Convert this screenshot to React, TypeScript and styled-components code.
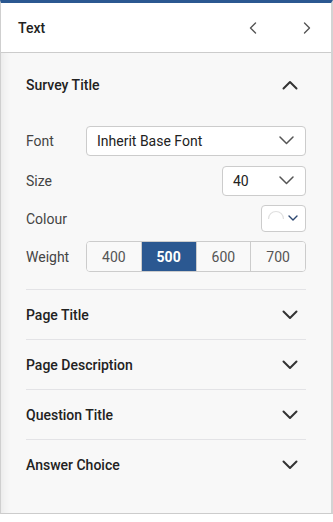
import React from "react";
import styled, { createGlobalStyle } from "styled-components";

const GlobalStyle = createGlobalStyle`
  html, body { margin: 0; padding: 0; background: #ffffff; }
  body { font-family: Roboto, "Liberation Sans", Arial, sans-serif; -webkit-font-smoothing: antialiased; }
  * { box-sizing: border-box; }
`;

const Panel = styled.div`
  width: 333px;
  border-top: 3px solid #2b5891;
  border-left: 1px solid #cfcfcf;
  border-right: 2px solid #d3d3d3;
  border-bottom: 1px solid #cccccc;
  background: #f8f8f8;
`;

const Header = styled.div`
  height: 50px;
  display: flex;
  align-items: center;
  padding: 0 14px 0 17px;
  background: #ffffff;
  border-bottom: 1px solid #cccccc;
`;

const HeaderTitle = styled.div`
  flex: 1;
  font-size: 14px;
  font-weight: 500;
  color: #222222;
`;

const NavButton = styled.button<{ $gap: number }>`
  width: 20px;
  height: 20px;
  padding: 0;
  border: none;
  background: transparent;
  display: flex;
  align-items: center;
  justify-content: center;
  margin-left: ${(p) => p.$gap}px;
`;

const Body = styled.div`
  padding: 7px 25px 24px 25px;
  box-shadow: inset 10px 0 10px -8px rgba(0, 0, 0, 0.07);
  display: flex;
  flex-direction: column;
`;

const Section = styled.div<{ $first?: boolean }>`
  border-top: ${(p) => (p.$first ? "none" : "1px solid #e3e3e6")};
`;

const SectionHeader = styled.div`
  height: 49px;
  display: flex;
  align-items: center;
  justify-content: space-between;
  padding-right: 8px;
`;

const SectionTitle = styled.div`
  font-size: 14px;
  font-weight: 500;
  color: #222222;
`;

const Content = styled.div`
  padding: 17px 0 17px 0;
  display: flex;
  flex-direction: column;
  gap: 9px;
`;

const Row = styled.div<{ $h: number; $mt?: number }>`
  height: ${(p) => p.$h}px;
  margin-top: ${(p) => p.$mt ?? 0}px;
  display: flex;
  align-items: center;
`;

const Label = styled.div`
  width: 60px;
  font-size: 14px;
  color: #444444;
`;

const Spacer = styled.div`
  flex: 1;
`;

const Select = styled.div<{ $w?: number }>`
  ${(p) => (p.$w ? `width: ${p.$w}px;` : "flex: 1;")}
  height: 100%;
  background: #ffffff;
  border: 1px solid #cccccc;
  border-radius: 4px;
  display: flex;
  align-items: center;
  padding: 0 11px 0 10px;
  font-size: 14px;
  color: #222222;
`;

const SelectText = styled.span`
  flex: 1;
`;

const ColourBox = styled.div`
  width: 45px;
  height: 100%;
  background: #ffffff;
  border: 1px solid #cccccc;
  border-radius: 4px;
  display: flex;
  align-items: center;
  padding: 0 7px 0 5px;
  justify-content: space-between;
`;

const Segments = styled.div`
  flex: 1;
  height: 100%;
  display: flex;
  border: 1px solid #cccccc;
  border-radius: 4px;
  overflow: hidden;
  background: #ffffff;
`;

const Segment = styled.div<{ $active?: boolean; $first?: boolean }>`
  flex: 1;
  display: flex;
  align-items: center;
  justify-content: center;
  font-size: 14px;
  border-left: ${(p) => (p.$first ? "none" : "1px solid #cccccc")};
  background: ${(p) => (p.$active ? "#2b5891" : "#f9f9f9")};
  color: ${(p) => (p.$active ? "#ffffff" : "#555555")};
  font-weight: ${(p) => (p.$active ? 700 : 400)};
`;

const ChevronDown = ({ w = 14, color = "#555", sw = 1.5 }: { w?: number; color?: string; sw?: number }) => (
  <svg width={w} height={w / 2 + 2} viewBox={`0 0 ${w} ${w / 2 + 2}`} fill="none">
    <path d={`M1 1 L${w / 2} ${w / 2} L${w - 1} 1`} stroke={color} strokeWidth={sw} strokeLinecap="round" strokeLinejoin="round" />
  </svg>
);

const ChevronUp = () => (
  <svg width="16" height="10" viewBox="0 0 16 10" fill="none">
    <path d="M1.5 8.5 L8 2 L14.5 8.5" stroke="#333" strokeWidth="2" strokeLinecap="round" strokeLinejoin="round" />
  </svg>
);

const SectionChevron = () => (
  <svg width="16" height="10" viewBox="0 0 16 10" fill="none">
    <path d="M1.5 1.5 L8 8 L14.5 1.5" stroke="#333" strokeWidth="2" strokeLinecap="round" strokeLinejoin="round" />
  </svg>
);

const NavChevron = ({ dir }: { dir: "left" | "right" }) => (
  <svg width="8" height="12" viewBox="0 0 8 12" fill="none">
    <path
      d={dir === "left" ? "M6.5 1 L1.5 6 L6.5 11" : "M1.5 1 L6.5 6 L1.5 11"}
      stroke="#555"
      strokeWidth="1.4"
      strokeLinecap="round"
      strokeLinejoin="round"
    />
  </svg>
);

const Swatch = () => (
  <svg width="18" height="18" viewBox="0 0 18 18" fill="none">
    <path d="M1.5 9 A7.5 7.5 0 0 1 16.5 9" stroke="#e0e0e0" strokeWidth="1.2" fill="none" />
  </svg>
);

const collapsed = ["Page Title", "Page Description", "Question Title", "Answer Choice"];
const weights = ["400", "500", "600", "700"];

export default function App() {
  return (
    <>
      <GlobalStyle />
      <Panel>
        <Header>
          <HeaderTitle>Text</HeaderTitle>
          <NavButton $gap={0}>
            <NavChevron dir="left" />
          </NavButton>
          <NavButton $gap={34}>
            <NavChevron dir="right" />
          </NavButton>
        </Header>
        <Body>
          <Section $first>
            <SectionHeader>
              <SectionTitle>Survey Title</SectionTitle>
              <ChevronUp />
            </SectionHeader>
            <Content>
              <Row $h={30}>
                <Label>Font</Label>
                <Select>
                  <SelectText>Inherit Base Font</SelectText>
                  <ChevronDown w={15} />
                </Select>
              </Row>
              <Row $h={30} $mt={1}>
                <Label>Size</Label>
                <Spacer />
                <Select $w={84}>
                  <SelectText>40</SelectText>
                  <ChevronDown w={15} />
                </Select>
              </Row>
              <Row $h={27}>
                <Label>Colour</Label>
                <Spacer />
                <ColourBox>
                  <Swatch />
                  <ChevronDown w={10} color="#2c4670" sw={1.4} />
                </ColourBox>
              </Row>
              <Row $h={31}>
                <Label>Weight</Label>
                <Segments>
                  {weights.map((w, i) => (
                    <Segment key={w} $first={i === 0} $active={w === "500"}>
                      {w}
                    </Segment>
                  ))}
                </Segments>
              </Row>
            </Content>
          </Section>
          {collapsed.map((t) => (
            <Section key={t}>
              <SectionHeader>
                <SectionTitle>{t}</SectionTitle>
                <SectionChevron />
              </SectionHeader>
            </Section>
          ))}
        </Body>
      </Panel>
    </>
  );
}
